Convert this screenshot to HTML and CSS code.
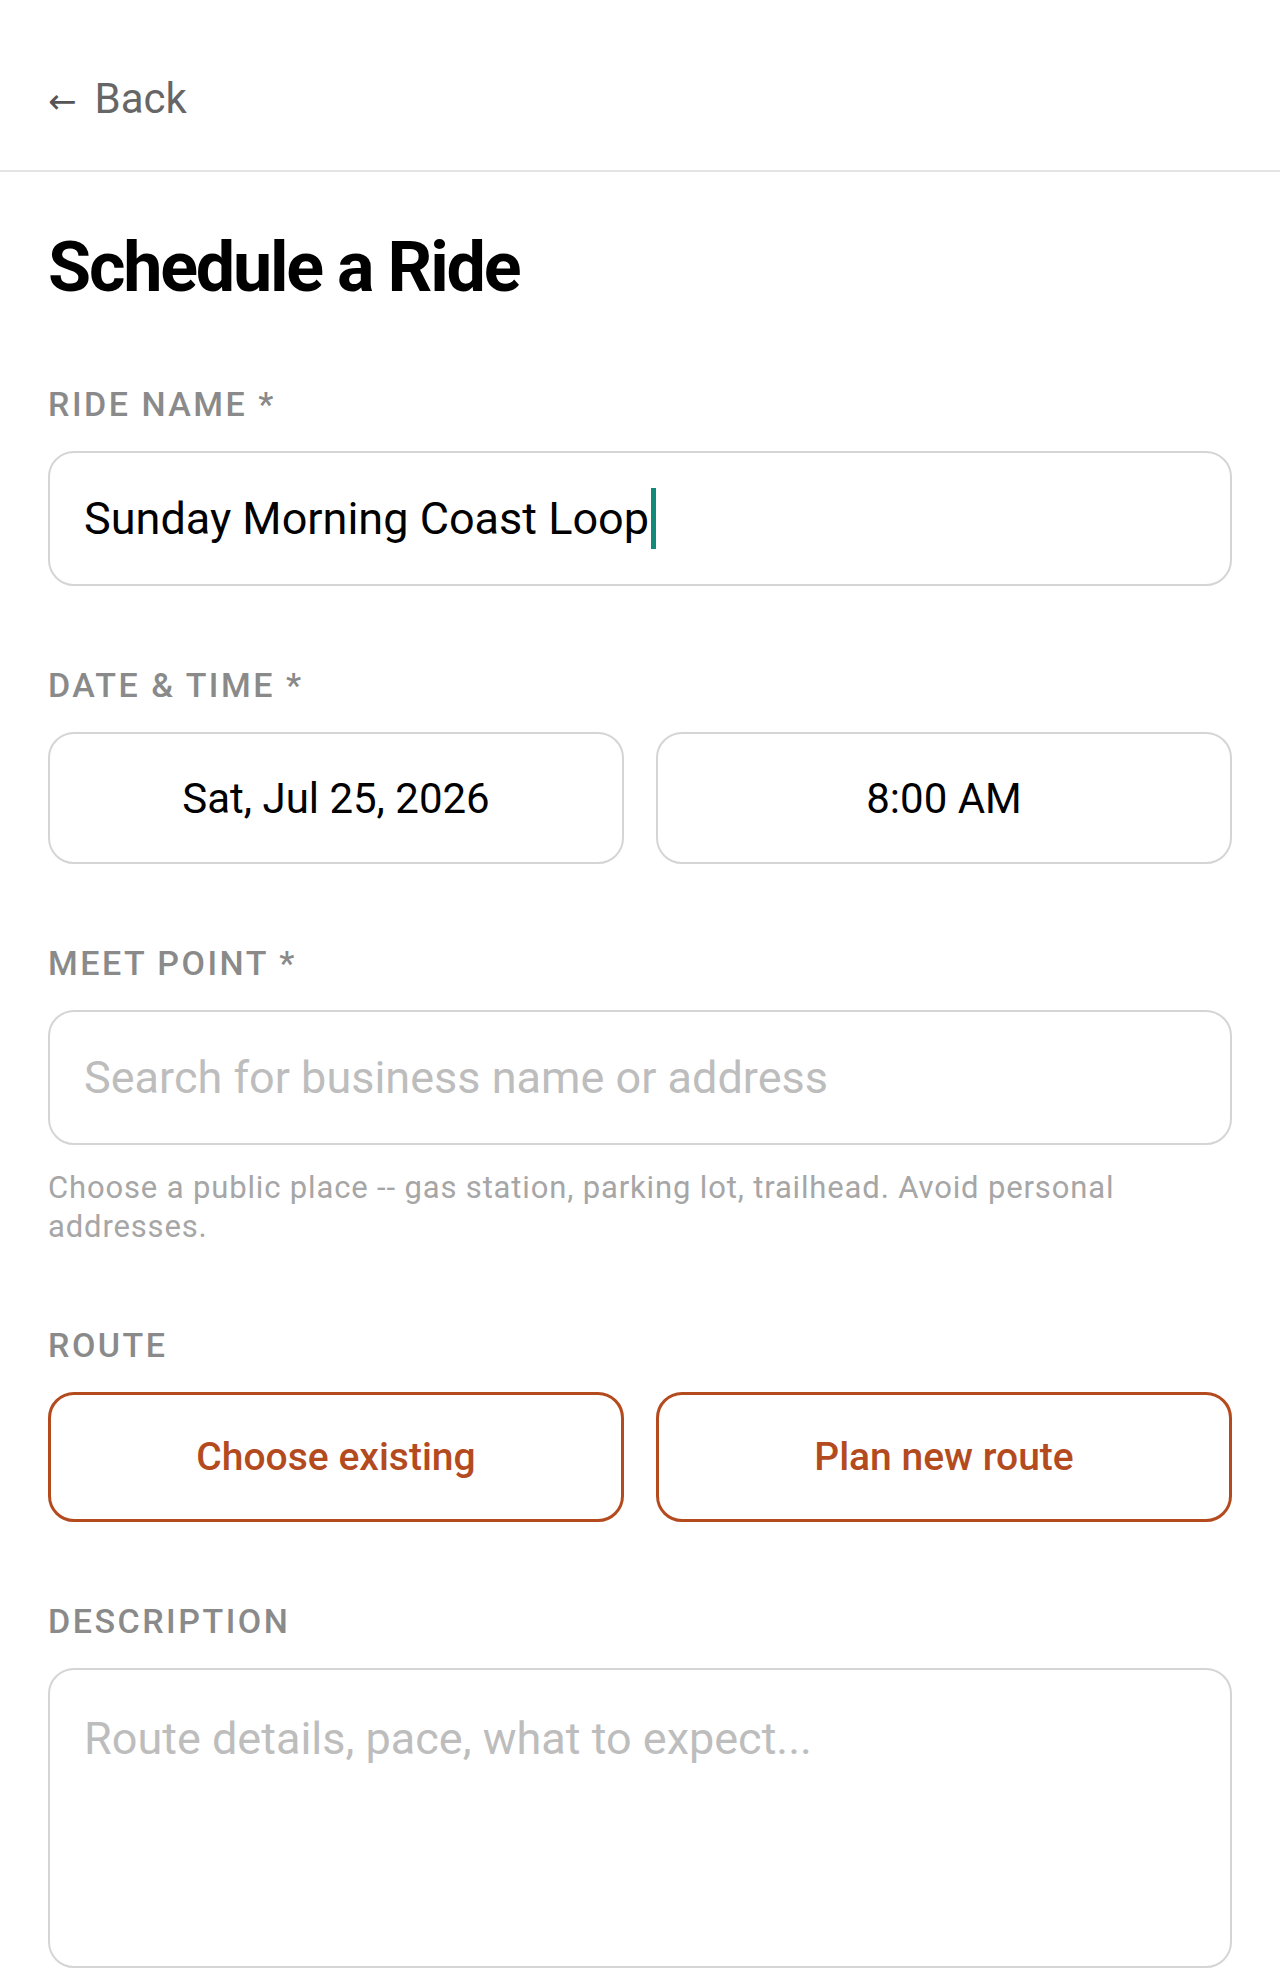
FILE: index.html
```html
<!DOCTYPE html>
<html lang="en">
<head>
<meta charset="utf-8">
<title>Schedule a Ride</title>
<link rel="stylesheet" href="styles.css">
</head>
<body>
<header class="topbar">
  <a class="back" href="#"><span class="back-arrow">←</span><span class="back-text">Back</span></a>
</header>
<main class="page">
  <h1 class="title">Schedule a Ride</h1>

  <section class="group">
    <div class="label">Ride name *</div>
    <div class="box input filled"><span class="value">Sunday Morning Coast Loop</span><span class="caret"></span></div>
  </section>

  <section class="group">
    <div class="label">Date &amp; time *</div>
    <div class="pair">
      <div class="box picker">Sat, Jul 25, 2026</div>
      <div class="box picker">8:00 AM</div>
    </div>
  </section>

  <section class="group">
    <div class="label">Meet point *</div>
    <input class="box input" type="text" placeholder="Search for business name or address">
    <p class="help">Choose a public place -- gas station, parking lot, trailhead. Avoid personal addresses.</p>
  </section>

  <section class="group">
    <div class="label">Route</div>
    <div class="pair">
      <button class="route-btn" type="button">Choose existing</button>
      <button class="route-btn" type="button">Plan new route</button>
    </div>
  </section>

  <section class="group">
    <div class="label">Description</div>
    <textarea class="box textarea" placeholder="Route details, pace, what to expect..."></textarea>
  </section>
</main>
</body>
</html>
```
FILE: styles.css
```css
* {
  box-sizing: border-box;
}

html, body {
  margin: 0;
  padding: 0;
  background: #ffffff;
}

body {
  font-family: Roboto, "Liberation Sans", Arial, sans-serif;
  color: #000000;
}

.topbar {
  padding: 74px 48px 44px;
  border-bottom: 2px solid #e4e4e4;
}

.back {
  display: inline-flex;
  align-items: baseline;
  gap: 18px;
  text-decoration: none;
  color: #666666;
  font-size: 42px;
  line-height: 50px;
}

.back-arrow {
  font-size: 34px;
  font-family: "DejaVu Sans", sans-serif;
  color: #555555;
}

.page {
  padding: 53px 48px 0;
}

.title {
  margin: 0 0 75px;
  font-size: 70px;
  line-height: 84px;
  font-weight: 700;
  letter-spacing: -2.2px;
  color: #000000;
}

.group {
  margin-bottom: 79px;
}

.label {
  font-size: 34px;
  line-height: 40px;
  font-weight: 500;
  letter-spacing: 2.5px;
  text-transform: uppercase;
  color: #8a8a8a;
  margin-bottom: 27px;
}

.box {
  display: flex;
  align-items: center;
  width: 100%;
  border: 2px solid #d5d5d5;
  border-radius: 26px;
  background: #ffffff;
  font-family: Roboto, "Liberation Sans", Arial, sans-serif;
  font-size: 45px;
  color: #000000;
}

.input {
  height: 135px;
  padding: 0 34px;
  outline: none;
}

.input::placeholder,
.textarea::placeholder {
  color: #bdbdbd;
  opacity: 1;
}

.caret {
  display: inline-block;
  width: 5px;
  height: 61px;
  margin-left: 2px;
  background: #13897a;
}

.pair {
  display: grid;
  grid-template-columns: 1fr 1fr;
  gap: 32px;
}

.picker {
  height: 132px;
  justify-content: center;
  font-size: 42px;
}

.help {
  margin: 23px 0 0;
  font-size: 31px;
  line-height: 39px;
  letter-spacing: 0.85px;
  color: #a6a6a6;
}

.route-btn {
  height: 130px;
  border: 3px solid #b34b1f;
  border-radius: 26px;
  background: #ffffff;
  color: #b34b1f;
  font-family: Roboto, "Liberation Sans", Arial, sans-serif;
  font-size: 39px;
  font-weight: 500;
  cursor: pointer;
}

.textarea {
  display: block;
  height: 300px;
  padding: 40px 34px;
  line-height: 57px;
  resize: none;
  outline: none;
}
```
